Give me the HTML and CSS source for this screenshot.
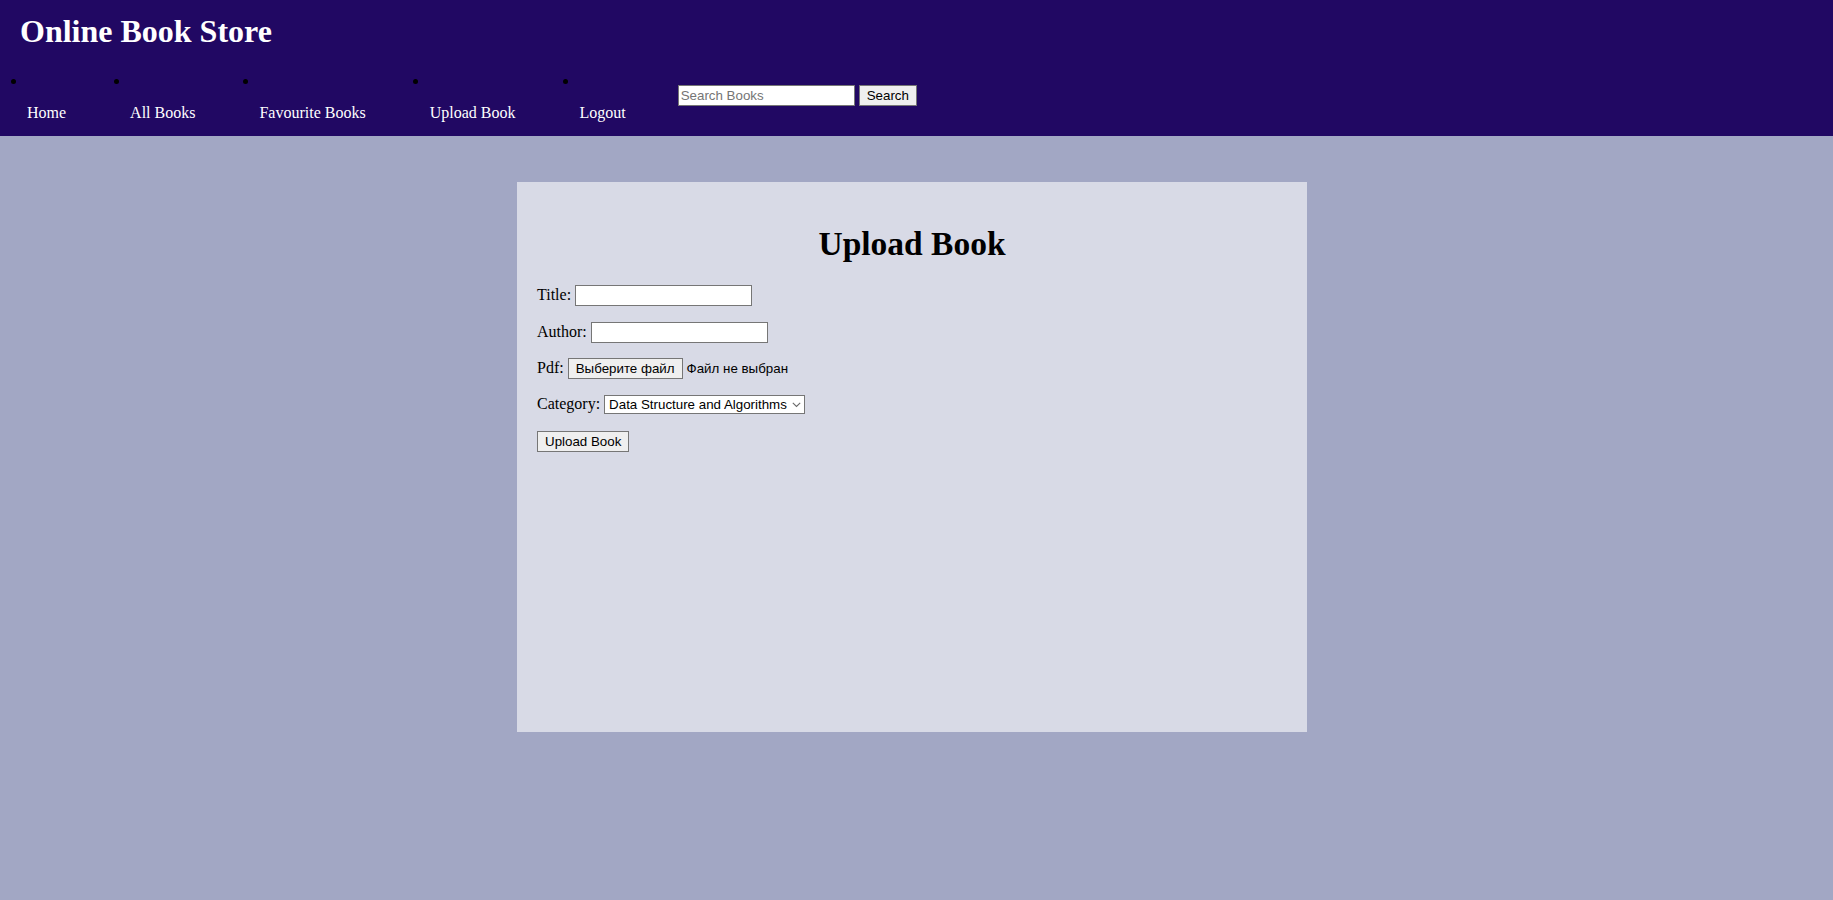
FILE: index.html
```html
<!DOCTYPE html>
<html lang="en">
<head>
<meta charset="utf-8">
<title>Online Book Store - Upload Book</title>
<link rel="stylesheet" href="styles.css">
</head>
<body>
<header class="site-header">
  <h1 class="brand">Online Book Store</h1>
  <nav class="nav">
    <ul class="nav-list">
      <li class="nav-item"><a class="nav-link" href="#">Home</a></li>
      <li class="nav-item"><a class="nav-link" href="#">All Books</a></li>
      <li class="nav-item"><a class="nav-link" href="#">Favourite Books</a></li>
      <li class="nav-item"><a class="nav-link" href="#">Upload Book</a></li>
      <li class="nav-item"><a class="nav-link" href="#">Logout</a></li>
    </ul>
    <form class="search">
      <input class="field search-field" type="text" placeholder="Search Books">
      <button class="btn" type="button">Search</button>
    </form>
  </nav>
</header>
<main class="page">
  <section class="card">
    <h1 class="card-title">Upload Book</h1>
    <form class="upload-form">
      <div class="row"><label class="label">Title:</label><input class="field" type="text"></div>
      <div class="row"><label class="label">Author:</label><input class="field" type="text"></div>
      <div class="row"><label class="label">Pdf:</label><button class="btn" type="button">Выберите файл</button><span class="file-status">Файл не выбран</span></div>
      <div class="row"><label class="label">Category:</label><span class="select-wrap"><select class="select"><option>Data Structure and Algorithms</option></select><svg class="chevron" width="9" height="6" viewBox="0 0 9 6"><polyline points="0.8,0.8 4.5,4.5 8.2,0.8" fill="none" stroke="#6a6a6a" stroke-width="1.1"/></svg></span></div>
      <div class="row"><button class="btn" type="button">Upload Book</button></div>
    </form>
  </section>
</main>
</body>
</html>
```
FILE: styles.css
```css
html, body {
  margin: 0;
  padding: 0;
}

body {
  background: #a2a7c4;
  font-family: "Liberation Serif", "Times New Roman", serif;
  font-size: 16px;
  color: #000;
  min-height: 900px;
}

.site-header {
  background: #210863;
  color: #fff;
  height: 136px;
}

.brand {
  margin: 0;
  padding: 13px 0 0 20px;
  font-size: 32px;
  line-height: 37px;
  font-weight: bold;
}

.nav {
  display: flex;
  align-items: flex-start;
}

.nav-list {
  display: flex;
  margin: 0;
  padding: 0 0 0 27px;
  list-style: none;
}

.nav-item {
  display: flex;
  flex-direction: column;
  margin-right: 64px;
}

.nav-item:last-child {
  margin-right: 0;
}

.nav-item::before {
  content: "";
  width: 5px;
  height: 5px;
  border-radius: 50%;
  background: #000;
  margin: 29px 0 0 -16.5px;
}

.nav-link {
  color: #fff;
  text-decoration: none;
  font-size: 16px;
  line-height: 18px;
  padding: 20px 0 14px;
}

.search {
  display: flex;
  gap: 4px;
  margin: 35px 0 0 52px;
}

.field {
  box-sizing: border-box;
  width: 177px;
  height: 21px;
  border: 1px solid #767676;
  padding: 1px 2px;
  background: #fff;
  font-family: "Liberation Sans", Arial, sans-serif;
  font-size: 13.333px;
  color: #000;
  border-radius: 0;
  outline: none;
}

.field::placeholder {
  color: #757575;
}

.btn {
  box-sizing: border-box;
  height: 21px;
  border: 1px solid #767676;
  padding: 1px 7px;
  background: #efefef;
  font-family: "Liberation Sans", Arial, sans-serif;
  font-size: 13.333px;
  color: #000;
  border-radius: 0;
}

.page {
  padding-top: 46px;
}

.card {
  box-sizing: border-box;
  width: 790px;
  height: 550px;
  margin-left: calc(50% - 399.5px);
  background: #d8dae6;
  padding: 43px 20px 0;
}

.card-title {
  margin: 0 0 23px;
  font-size: 33.5px;
  line-height: 37px;
  font-weight: bold;
  text-align: center;
}

.upload-form {
  margin: 0;
}

.row {
  display: flex;
  align-items: baseline;
  gap: 4px;
  height: 21px;
  margin-bottom: 15.5px;
}

.label {
  font-size: 16px;
}

.file-status {
  font-family: "Liberation Sans", Arial, sans-serif;
  font-size: 13.333px;
}

.select-wrap {
  position: relative;
  display: inline-block;
}

.select {
  box-sizing: border-box;
  -webkit-appearance: none;
  appearance: none;
  width: 201px;
  height: 19px;
  border: 1px solid #767676;
  border-radius: 0;
  padding: 0 16px 0 4px;
  background: #fff;
  font-family: "Liberation Sans", Arial, sans-serif;
  font-size: 13.333px;
  color: #000;
}

.chevron {
  position: absolute;
  right: 4px;
  top: 7px;
  pointer-events: none;
}
```
